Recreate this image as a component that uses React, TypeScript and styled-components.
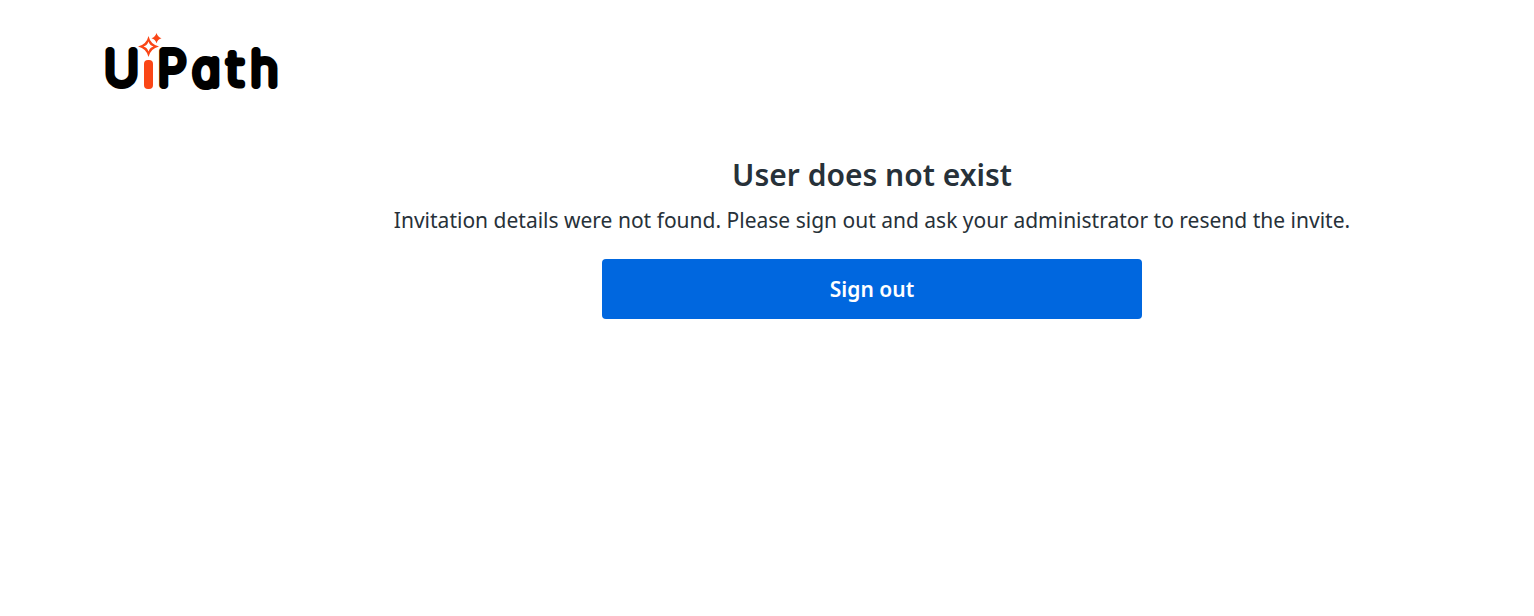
import React from 'react';
import styled, { createGlobalStyle } from 'styled-components';

const GlobalStyle = createGlobalStyle`
  *, *::before, *::after { box-sizing: border-box; }
  body {
    margin: 0;
    background: #ffffff;
    color: #273139;
    font-family: "Noto Sans", sans-serif;
  }
`;

const Page = styled.div`
  display: flex;
  flex-direction: column;
  min-height: 100vh;
`;

const Header = styled.header`
  padding: 30px 105px 0;
`;

const Logo = styled.svg`
  display: block;
  width: 180px;
  height: 64px;
  overflow: visible;
`;

const LogoText = styled.text`
  font-family: Inter, sans-serif;
  font-size: 46px;
  font-weight: 100;
  font-optical-sizing: none;
  font-feature-settings: "cv11" 1;
  fill: #000000;
  stroke: #000000;
  stroke-width: 8px;
  stroke-linejoin: round;
`;

const CurvedLetter = styled.tspan`
  font-family: "DejaVu Sans", sans-serif;
  font-size: 45px;
  font-weight: 200;
  stroke-width: 7px;
`;

const Main = styled.main`
  display: flex;
  flex-direction: column;
  align-items: center;
  padding: 60px 0 0 210px;
  text-align: center;
`;

const Title = styled.h1`
  margin: 0;
  font-size: 30px;
  font-weight: 600;
  line-height: 42px;
`;

const Message = styled.p`
  margin: 9px 0 0;
  font-size: 21px;
  line-height: 30px;
`;

const SignOutButton = styled.button`
  width: 100%;
  max-width: 540px;
  height: 60px;
  margin-top: 24px;
  border: 0;
  border-radius: 4px;
  background: #0067df;
  color: #ffffff;
  font: inherit;
  font-size: 21px;
  font-weight: 600;
  line-height: 30px;
  cursor: pointer;
`;

function UiPathLogo() {
  return (
    <Logo viewBox="0 0 180 64" role="img" aria-label="UiPath">
      <LogoText x="0" y="55">U</LogoText>
      <rect x="39" y="30" width="9" height="29" rx="4" fill="#fa4616" />
      <LogoText x="53 88" y="55">
        Pa<CurvedLetter x="121">t</CurvedLetter><tspan x="146">h</tspan>
      </LogoText>
      <path
        fill="#fa4616"
        fillRule="evenodd"
        d="M43.500 6 Q45.500 14.500 54 16.500 Q45.500 18.500 43.500 27 Q41.500 18.500 33 16.500 Q41.500 14.500 43.500 6Z M43.500 11.500 Q42.300 15.300 38.500 16.500 Q42.300 17.700 43.500 21.500 Q44.700 17.700 48.500 16.500 Q44.700 15.300 43.500 11.500Z"
      />
      <path fill="#fa4616" d="M51.500 3 Q52.600 7 56.500 8.200 Q52.600 9.400 51.500 13.300 Q50.400 9.400 46.500 8.200 Q50.400 7 51.500 3Z" />
    </Logo>
  );
}

export default function App() {
  return (
    <>
      <GlobalStyle />
      <Page>
        <Header>
          <UiPathLogo />
        </Header>
        <Main>
          <Title>User does not exist</Title>
          <Message>
            Invitation details were not found. Please sign out and ask your administrator to resend the invite.
          </Message>
          <SignOutButton type="button">Sign out</SignOutButton>
        </Main>
      </Page>
    </>
  );
}
